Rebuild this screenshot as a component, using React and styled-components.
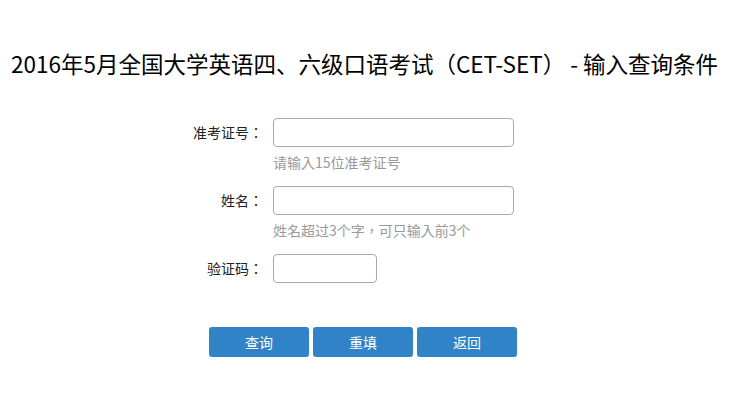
import React from "react";
import styled, { createGlobalStyle } from "styled-components";

const GlobalStyle = createGlobalStyle`
  body {
    margin: 0;
    background: #fff;
    font-family: "Microsoft YaHei", "Noto Sans CJK SC", "Noto Sans", sans-serif;
    color: #000;
  }
`;

const Page = styled.div`
  width: 729px;
`;

const Title = styled.h1`
  margin: 47px 0 0;
  font-size: 22.5px;
  font-weight: normal;
  line-height: 32px;
  text-align: center;
  white-space: nowrap;
`;

const Form = styled.form`
  margin-top: 39px;
  padding-left: 183px;
`;

const Row = styled.div`
  display: grid;
  grid-template-columns: 80px 1fr;
  column-gap: 10px;
  margin-bottom: ${({ $last }) => ($last ? "44px" : "15px")};
`;

const Label = styled.label`
  height: 29px;
  line-height: 29px;
  font-size: 14px;
  color: #222;
  text-align: right;
  white-space: nowrap;
`;

/* centred full-width colon, as in the original's font */
const Colon = styled.span`
  font-family: "Noto Sans CJK TC", sans-serif;
`;

const Control = styled.div`
  display: flex;
  flex-direction: column;
`;

const Input = styled.input`
  box-sizing: border-box;
  width: ${({ $w }) => $w || 241}px;
  height: 29px;
  border: 1px solid #a9a9a9;
  border-radius: 4px;
  padding: 0 6px;
  font-size: 14px;
  outline: none;
`;

const Hint = styled.div`
  margin-top: 6px;
  font-family: "Noto Sans CJK TC", "Noto Sans CJK SC", sans-serif;
  font-size: 14px;
  line-height: 18px;
  color: #999;
`;

const ButtonBar = styled.div`
  display: flex;
  gap: 4px;
  margin-left: 26px;
`;

const Button = styled.button`
  width: 100px;
  height: 30px;
  border: none;
  border-radius: 3px;
  background: #3183c8;
  color: #fff;
  font-family: inherit;
  font-size: 14px;
  cursor: pointer;
`;

const fields = [
  { label: "准考证号", hint: "请输入15位准考证号" },
  { label: "姓名", hint: "姓名超过3个字，可只输入前3个" },
  { label: "验证码", width: 104, last: true },
];

export default function App() {
  return (
    <Page>
      <GlobalStyle />
      <Title>2016年5月全国大学英语四、六级口语考试（CET-SET） - 输入查询条件</Title>
      <Form onSubmit={(e) => e.preventDefault()}>
        {fields.map((f) => (
          <Row key={f.label} $last={f.last}>
            <Label>
              {f.label}
              <Colon>：</Colon>
            </Label>
            <Control>
              <Input type="text" $w={f.width} />
              {f.hint && <Hint>{f.hint}</Hint>}
            </Control>
          </Row>
        ))}
        <ButtonBar>
          <Button type="submit">查询</Button>
          <Button type="reset">重填</Button>
          <Button type="button">返回</Button>
        </ButtonBar>
      </Form>
    </Page>
  );
}
